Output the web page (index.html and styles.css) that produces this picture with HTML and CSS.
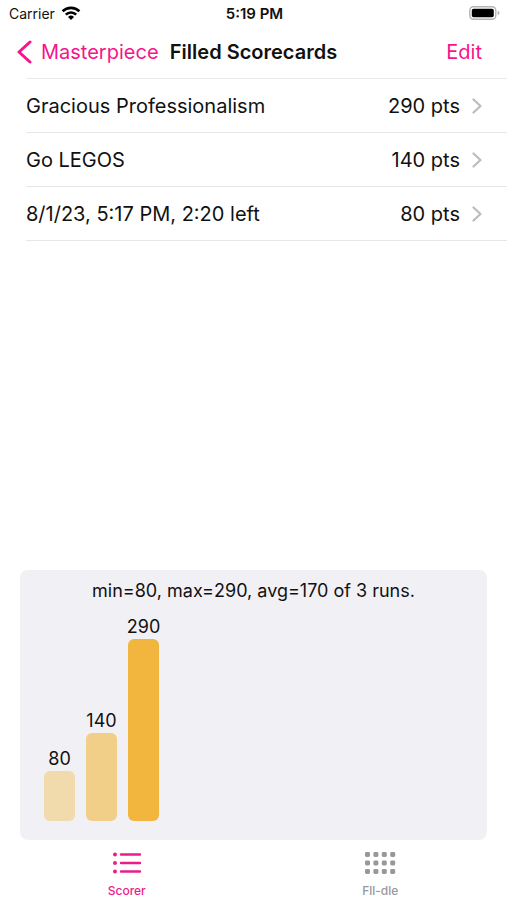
FILE: index.html
```html
<!DOCTYPE html>
<html lang="en">
<head>
<meta charset="utf-8">
<meta name="viewport" content="width=device-width, initial-scale=1">
<title>Filled Scorecards</title>
<link rel="stylesheet" href="styles.css">
</head>
<body>
<div class="status">
  <div class="carrier">Carrier
    <svg width="20" height="14" viewBox="0 0 20 14" aria-hidden="true"><g fill="none" stroke="#000" stroke-width="2.6"><path d="M1.6 5.3a12 12 0 0 1 16.8 0"/><path d="M4.8 8.7a7.4 7.4 0 0 1 10.4 0"/></g><path d="M10 14l-3-3a4.3 4.3 0 0 1 6 0z"/></svg>
  </div>
  <time class="clock">5:19 PM</time>
  <svg class="battery" width="31" height="14" viewBox="0 0 31 14" aria-hidden="true"><rect x=".8" y=".8" width="26" height="12.4" rx="3.6" fill="#fff" stroke="#b4b4b4" stroke-width="1.4"/><rect x="2.8" y="2.8" width="22" height="8.4" rx="1.8"/><path d="M28.6 4.8q2 .6 2 2.2t-2 2.2z" fill="#b4b4b4"/></svg>
</div>
<header class="nav">
  <a class="back" href="#masterpiece"><svg width="15" height="24" viewBox="0 0 15 24" aria-hidden="true"><path d="M13 2L2 12 13 22" fill="none" stroke="currentColor" stroke-width="3" stroke-linecap="round" stroke-linejoin="round"/></svg>Masterpiece</a>
  <h1>Filled Scorecards</h1>
  <button class="edit" type="button">Edit</button>
</header>
<main>
  <ul class="list">
    <li><a href="#run1"><span>Gracious Professionalism</span><span class="pts">290 pts</span><svg class="chev" width="10" height="16" viewBox="0 0 10 16" aria-hidden="true"><path d="M1.5 1.5L8.5 8l-7 6.5"/></svg></a></li>
    <li><a href="#run2"><span>Go LEGOS</span><span class="pts">140 pts</span><svg class="chev" width="10" height="16" viewBox="0 0 10 16" aria-hidden="true"><path d="M1.5 1.5L8.5 8l-7 6.5"/></svg></a></li>
    <li><a href="#run3"><span>8/1/23, 5:17 PM, 2:20 left</span><span class="pts">80 pts</span><svg class="chev" width="10" height="16" viewBox="0 0 10 16" aria-hidden="true"><path d="M1.5 1.5L8.5 8l-7 6.5"/></svg></a></li>
  </ul>
  <section class="chart">
    <p class="summary">min=80, max=290, avg=170 of 3 runs.</p>
    <div class="bars">
      <div class="col"><span>80</span><div class="bar low" style="height:50px"></div></div>
      <div class="col"><span>140</span><div class="bar mid" style="height:88px"></div></div>
      <div class="col"><span>290</span><div class="bar high" style="height:182px"></div></div>
    </div>
  </section>
</main>
<nav class="tabs">
  <a class="tab active" href="#scorer"><svg width="30" height="24" viewBox="0 0 30 24" aria-hidden="true"><g fill="currentColor"><circle cx="3" cy="3.5" r="2"/><circle cx="3" cy="12" r="2"/><circle cx="3" cy="20.5" r="2"/></g><path d="M9 3.5h19M9 12h19M9 20.5h19" stroke="currentColor" stroke-width="2.4" stroke-linecap="round"/></svg>Scorer</a>
  <a class="tab" href="#fll-dle"><svg width="32" height="24" viewBox="0 0 32 24" aria-hidden="true"><g fill="currentColor"><rect x="1" y="1" width="5" height="5" rx="1.4"/><rect x="9.4" y="1" width="5" height="5" rx="1.4"/><rect x="17.8" y="1" width="5" height="5" rx="1.4"/><rect x="26.2" y="1" width="5" height="5" rx="1.4"/><rect x="1" y="9.5" width="5" height="5" rx="1.4"/><rect x="9.4" y="9.5" width="5" height="5" rx="1.4"/><rect x="17.8" y="9.5" width="5" height="5" rx="1.4"/><rect x="26.2" y="9.5" width="5" height="5" rx="1.4"/><rect x="1" y="18" width="5" height="5" rx="1.4"/><rect x="9.4" y="18" width="5" height="5" rx="1.4"/><rect x="17.8" y="18" width="5" height="5" rx="1.4"/><rect x="26.2" y="18" width="5" height="5" rx="1.4"/></g></svg>Fll-dle</a>
</nav>
</body>
</html>
```
FILE: styles.css
```css
* { box-sizing: border-box; }
body {
  margin: 0;
  min-height: 100vh;
  display: flex;
  flex-direction: column;
  background: #fff;
  color: #111;
  font-family: Inter, "Liberation Sans", sans-serif;
  font-size: 20px;
}
a { color: inherit; text-decoration: none; }
svg { flex: none; }
.status {
  display: grid;
  grid-template-columns: 1fr auto 1fr;
  align-items: center;
  height: 26px;
  padding: 0 7px 0 9px;
  font-size: 14px;
}
.carrier { display: flex; align-items: center; gap: 6px; }
.clock { font-size: 15px; font-weight: 600; }
.battery { justify-self: end; }
.nav {
  display: grid;
  grid-template-columns: 1fr auto 1fr;
  align-items: center;
  height: 52px;
  padding: 0 25px 0 17px;
}
.back { display: flex; align-items: center; gap: 9px; color: #f5148c; }
h1 { margin: 0 0 0 8px; font-size: 20px; font-weight: 600; }
.edit {
  justify-self: end;
  padding: 0;
  border: 0;
  background: none;
  color: #f5148c;
  font: inherit;
}
main { flex: 1; display: flex; flex-direction: column; }
.list {
  margin: 0 0 0 26px;
  padding: 0;
  list-style: none;
  border-top: 1px solid #ebebeb;
}
.list a {
  display: flex;
  align-items: center;
  height: 54px;
  padding-right: 25px;
  border-bottom: 1px solid #e6e6e6;
}
.pts { margin-left: auto; }
.chev {
  margin-left: 12px;
  fill: none;
  stroke: #bcbcbf;
  stroke-width: 2.2;
  stroke-linecap: round;
  stroke-linejoin: round;
}
.chart {
  margin: auto 20px 0;
  height: 270px;
  padding: 9px 24px 19px;
  display: flex;
  flex-direction: column;
  border-radius: 8px;
  background: #f1f0f5;
}
.summary { margin: 0; text-align: center; font-size: 18px; line-height: 24px; }
.bars { flex: 1; display: flex; align-items: flex-end; gap: 11px; font-size: 18px; line-height: 24px; }
.col { width: 31px; display: flex; flex-direction: column; align-items: center; }
.bar { width: 100%; border-radius: 6px; }
.low { background: #f1daab; }
.mid { background: #f2cf89; }
.high { background: #f2b53d; }
.tabs { display: flex; height: 60px; }
.tab {
  flex: 1;
  display: flex;
  flex-direction: column;
  align-items: center;
  gap: 8px;
  padding-top: 11px;
  color: #98989b;
  font-size: 12px;
  font-weight: 500;
  line-height: 16px;
}
.active { color: #ec1c8b; }
```
